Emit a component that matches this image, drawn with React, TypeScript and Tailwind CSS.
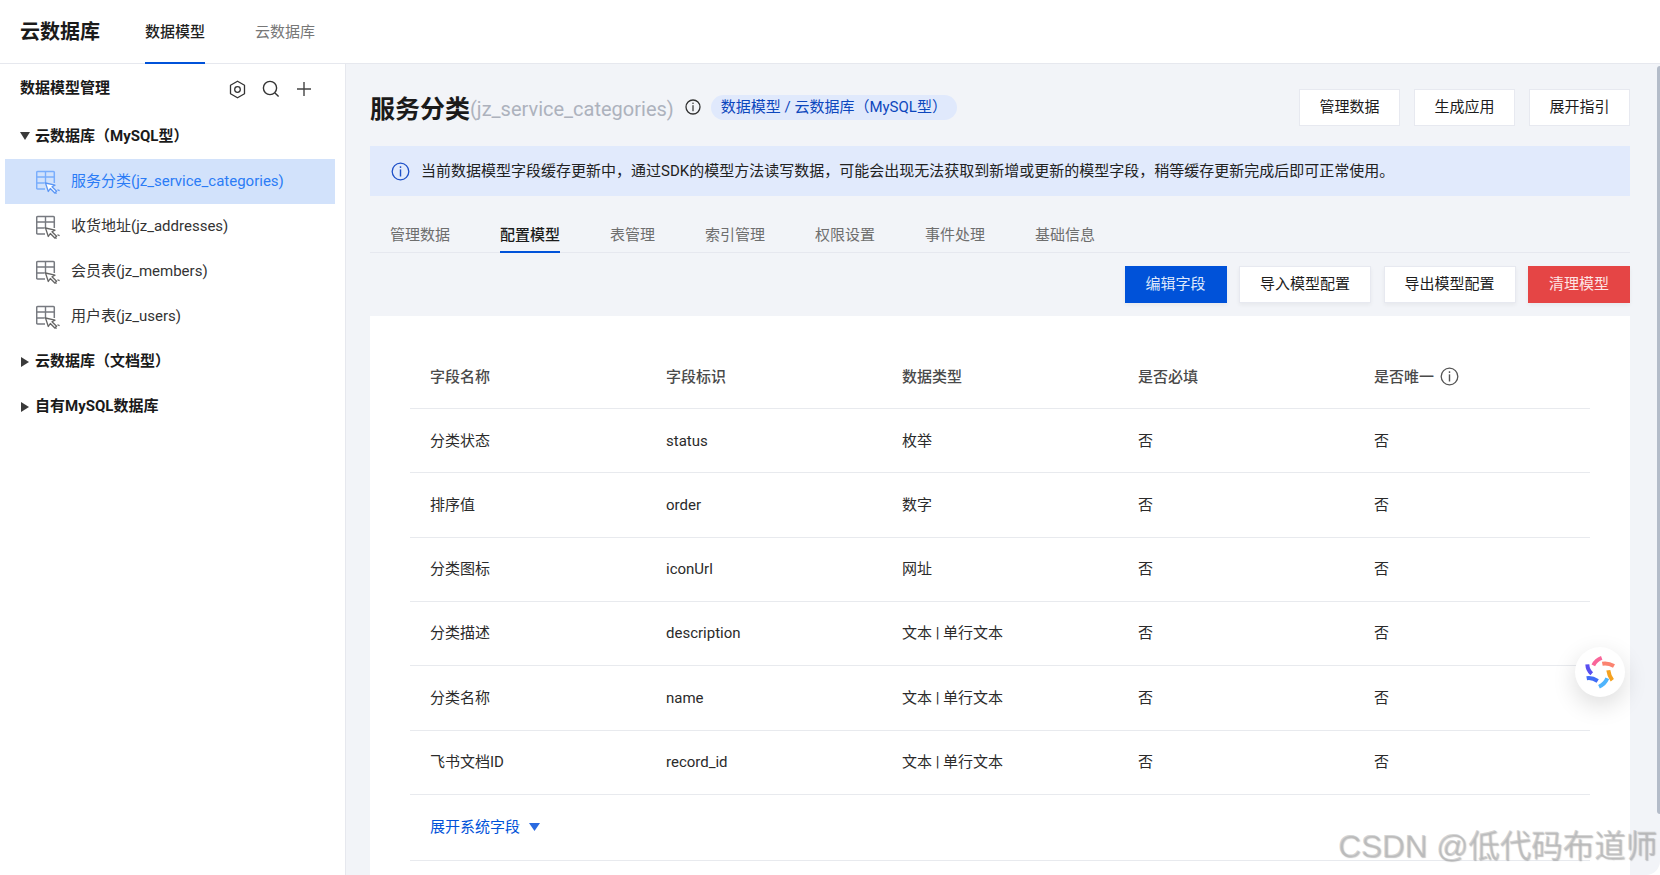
import React from "react";

const sans = "font-['Roboto','Noto_Sans_CJK_SC',sans-serif]";

function TableIcon({ active }: { active?: boolean }) {
  const c = active ? "#7aaefc" : "#777a80";
  const d = active ? "#5c97f5" : "#666";
  return (
    <svg width="24" height="24" viewBox="0 0 24 24" fill="none" className="shrink-0">
      <path d="M9 19H1.6a.9.9 0 0 1-.9-.9V2.4a.9.9 0 0 1 .9-.9h15.8a.9.9 0 0 1 .9.9V13" stroke={c} strokeWidth="1.5" />
      <path d="M.7 7h17.6M.7 13h8M9.5 1.5V13" stroke={c} strokeWidth="1.4" />
      <path d="M9.5 13l2.8 8.5 2-3 4.5 4.5 1.8-1.8-4.6-4.4 3-1.6z" fill="#fff" stroke={d} strokeWidth="1.3" strokeLinejoin="round" />
      <path d="M21.4 19.8l2.2.8M19.6 22.6l.8 1.2" stroke={d} strokeWidth="1.2" />
    </svg>
  );
}

function InfoIcon({ size = 16, color = "#333", sw = 1.3 }: { size?: number; color?: string; sw?: number }) {
  return (
    <svg width={size} height={size} viewBox="0 0 16 16" fill="none" className="shrink-0">
      <circle cx="8" cy="8" r="7" stroke={color} strokeWidth={sw} />
      <rect x="7.4" y="3.6" width="1.2" height="1.4" fill={color} />
      <rect x="7.4" y="6.2" width="1.2" height="6" fill={color} />
    </svg>
  );
}

function Arrow({ open }: { open?: boolean }) {
  return open ? (
    <svg width="10" height="8" viewBox="0 0 10 8" className="shrink-0"><path d="M0 0h10L5 8z" fill="#3a3a3a" /></svg>
  ) : (
    <svg width="8" height="10" viewBox="0 0 8 10" className="shrink-0 mx-px"><path d="M0 0v10l8-5z" fill="#3a3a3a" /></svg>
  );
}

function Logo() {
  return (
    <svg width="30" height="30" viewBox="0 0 30 30" fill="none" className="overflow-visible">
      <path d="M8.3 8.3Q11 3 16.7 .9" stroke="#f9669a" strokeWidth="4" />
      <path d="M17.3 6.7Q23 5.6 29 9" stroke="#fb8370" strokeWidth="4" />
      <path d="M23.3 13.3Q24 19 27.3 23.3" stroke="#f5a11f" strokeWidth="4" />
      <path d="M22.3 21.3Q20 27 14 29.7" stroke="#4fb4fc" strokeWidth="4" />
      <path d="M1.7 21.3Q7 20.3 12.7 24" stroke="#3f6cf6" strokeWidth="4" />
      <path d="M2.3 7.3Q2.6 13 6.7 16.7" stroke="#5a4ff0" strokeWidth="4" />
    </svg>
  );
}

const items = [
  { t: "服务分类(jz_service_categories)", a: true },
  { t: "收货地址(jz_addresses)" },
  { t: "会员表(jz_members)" },
  { t: "用户表(jz_users)" },
];

const rows = [
  ["分类状态", "status", "枚举"],
  ["排序值", "order", "数字"],
  ["分类图标", "iconUrl", "网址"],
  ["分类描述", "description", "文本 | 单行文本"],
  ["分类名称", "name", "文本 | 单行文本"],
  ["飞书文档ID", "record_id", "文本 | 单行文本"],
];

const tabs = ["管理数据", "配置模型", "表管理", "索引管理", "权限设置", "事件处理", "基础信息"];

function TopButton({ children }: { children: React.ReactNode }) {
  return (
    <button className="h-[37px] w-[101px] bg-white border border-[#e7e9f0] text-[15px] text-[#1c1c1c]">{children}</button>
  );
}

export default function App() {
  return (
    <div className={`${sans} relative w-[1660px] h-[875px] overflow-hidden bg-white text-[15px] text-[#262626]`}>
      {/* top bar */}
      <header className="h-[64px] flex items-stretch border-b border-[#e6e8ee] pl-[20px]">
        <div className="text-[20px] font-bold text-[#1a1a1a] w-[125px] flex items-center">云数据库</div>
        <div className="w-[60px] mr-[50px] pt-[1px] flex items-center justify-center relative font-medium text-[#1f1f1f]">
          数据模型
          <span className="absolute left-0 right-0 bottom-[-1px] h-[2px] bg-[#0052d9]" />
        </div>
        <div className="flex items-center pt-[1px] text-[#777]">云数据库</div>
      </header>

      <div className="flex h-[811px]">
        {/* sidebar */}
        <aside className="w-[346px] shrink-0 border-r border-[#e6e8ee] bg-white">
          <div className="h-[48px] pl-[20px] pr-[31px] flex items-center justify-between">
            <span className="font-bold text-[#1a1a1a]">数据模型管理</span>
            <div className="flex items-center gap-[16px] mr-[2px] pt-[2px]">
              <svg width="17" height="19" viewBox="0 0 17 19" fill="none">
                <path d="M8.5 1.2l7 4v8.6l-7 4-7-4V5.2z" stroke="#333" strokeWidth="1.3" strokeLinejoin="round" />
                <circle cx="8.5" cy="9.5" r="2.8" stroke="#333" strokeWidth="1.3" />
              </svg>
              <svg width="18" height="18" viewBox="0 0 18 18" fill="none">
                <circle cx="8" cy="8" r="6.6" stroke="#333" strokeWidth="1.4" />
                <path d="M13 13l3.6 3.6" stroke="#333" strokeWidth="1.4" />
              </svg>
              <svg width="16" height="16" viewBox="0 0 16 16" fill="none">
                <path d="M8 1v14M1 8h14" stroke="#444" strokeWidth="1.4" />
              </svg>
            </div>
          </div>
          <div className="h-[47px] pl-[20px] pt-[1px] flex items-center gap-[5px] font-bold text-[#1a1a1a]">
            <Arrow open />
            <span>云数据库（MySQL型）</span>
          </div>
          <div className="mx-[5px] w-[330px]">
            {items.map((it) => (
              <div
                key={it.t}
                className={`h-[45px] pl-[31px] flex items-center gap-[11px] ${it.a ? "bg-[#d2e2fb] text-[#2b7cf6]" : "text-[#333]"}`}
              >
                <TableIcon active={it.a} />
                <span>{it.t}</span>
              </div>
            ))}
          </div>
          <div className="h-[45px] pl-[20px] flex items-center gap-[5px] font-bold text-[#1a1a1a]">
            <Arrow />
            <span>云数据库（文档型）</span>
          </div>
          <div className="h-[45px] pl-[20px] flex items-center gap-[5px] font-bold text-[#1a1a1a]">
            <Arrow />
            <span>自有MySQL数据库</span>
          </div>
        </aside>

        {/* main */}
        <main className="flex-1 bg-[#f2f4f8] rounded-br-[14px] overflow-hidden min-w-0 pr-[30px] pl-[24px]">
          <div className="flex items-center h-[82px] pt-[8px] w-[1260px]">
            <h1 className="text-[25px] font-bold text-[#1a1a1a] leading-none">服务分类</h1>
            <span className="text-[20px] text-[#adb2bd] leading-none">(jz_service_categories)</span>
            <span className="ml-[11px] mr-[10px] -mt-[4px]"><InfoIcon size={16} color="#333" /></span>
            <span className="h-[25px] w-[246px] -mt-[4px] rounded-full bg-[#e0e9fc] text-[#0d47bd] flex items-center pl-[10px] text-[15px] whitespace-nowrap">
              数据模型 / 云数据库（MySQL型）
            </span>
            <div className="ml-auto flex gap-[14px] -mt-[4px]">
              <TopButton>管理数据</TopButton>
              <TopButton>生成应用</TopButton>
              <TopButton>展开指引</TopButton>
            </div>
          </div>

          <div className="h-[50px] bg-[#e1eafc] flex items-center pl-[21px] gap-[11px] text-[15px] text-[#222] w-[1260px]">
            <InfoIcon size={19} color="#1e50c8" sw={1.1} />
            <span>当前数据模型字段缓存更新中，通过SDK的模型方法读写数据，可能会出现无法获取到新增或更新的模型字段，稍等缓存更新完成后即可正常使用。</span>
          </div>

          <div className="h-[57px] w-[1260px] border-b border-[#e6e8ef] flex items-stretch gap-[50px] pl-[20px] pt-[19px]">
            {tabs.map((t, i) => (
              <div key={t} className={`relative flex items-center h-[37px] pt-[4px] ${i === 1 ? "font-medium text-[#1c1c1c]" : "text-[#6e6e6e]"}`}>
                {t}
                {i === 1 && <span className="absolute left-0 right-0 -bottom-[1px] h-[2px] bg-[#0052d9]" />}
              </div>
            ))}
          </div>

          <div className="w-[1260px] flex justify-end gap-[12.5px] pt-[13px] h-[63px]">
            <button className="h-[37px] w-[102px] bg-[#0052d9] text-[#dfe9fb] shadow-[0_2px_4px_rgba(0,0,0,.05)]">编辑字段</button>
            <button className="h-[37px] w-[132px] bg-white border border-[#e7e9f0] text-[#1c1c1c] shadow-[0_2px_4px_rgba(0,0,0,.05)]">导入模型配置</button>
            <button className="h-[37px] w-[132px] bg-white border border-[#e7e9f0] text-[#1c1c1c] shadow-[0_2px_4px_rgba(0,0,0,.05)]">导出模型配置</button>
            <button className="h-[37px] w-[102px] bg-[#e54545] text-[#fde4e4] shadow-[0_2px_4px_rgba(0,0,0,.05)]">清理模型</button>
          </div>

          <section className="w-[1260px] h-[600px] bg-white px-[40px]">
            <div className="grid grid-cols-5 h-[93.2px] border-b border-[#e8eaee] items-end pb-[20px] font-medium text-[#4a4a4a]">
              {["字段名称", "字段标识", "数据类型", "是否必填"].map((h) => (
                <div key={h} className="pl-[20px]">{h}</div>
              ))}
              <div className="pl-[20px] flex items-center gap-[6px]">是否唯一<InfoIcon size={19} color="#555" sw={1.1} /></div>
            </div>
            {rows.map((r) => (
              <div key={r[1]} className="grid grid-cols-5 h-[64.3px] border-b border-[#e8eaee] items-center text-[#2b2b2b]">
                <div className="pl-[20px]">{r[0]}</div>
                <div className="pl-[20px]">{r[1]}</div>
                <div className="pl-[20px]">{r[2]}</div>
                <div className="pl-[20px]">否</div>
                <div className="pl-[20px]">否</div>
              </div>
            ))}
            <div className="h-[66px] border-b border-[#e8eaee] flex items-center pl-[20px] gap-[9px] text-[#0052d9]">
              展开系统字段
              <svg width="11" height="8" viewBox="0 0 11 8"><path d="M0 0h11L5.5 8z" fill="#2a6ae0" /></svg>
            </div>
          </section>
        </main>
      </div>

      {/* page scrollbar */}
      <div className="absolute right-0 top-[66px] w-[3px] h-[748px] bg-[#b4bcc9] rounded-l-[3px]" />

      {/* floating assistant */}
      <div className="absolute left-[1575px] top-[647px] w-[50px] h-[50px] rounded-full bg-white shadow-[0_8px_24px_rgba(0,0,0,.14)] flex items-center justify-center">
        <Logo />
      </div>

      {/* watermark */}
      <div className="absolute right-[3px] top-[827px] text-[31.5px] leading-[38px] whitespace-nowrap text-[rgba(175,175,175,.5)] [text-shadow:1px_1px_1px_rgba(90,90,90,.35)] font-['Liberation_Sans','Noto_Sans_CJK_SC',sans-serif]">
        CSDN @低代码布道师
      </div>
    </div>
  );
}
